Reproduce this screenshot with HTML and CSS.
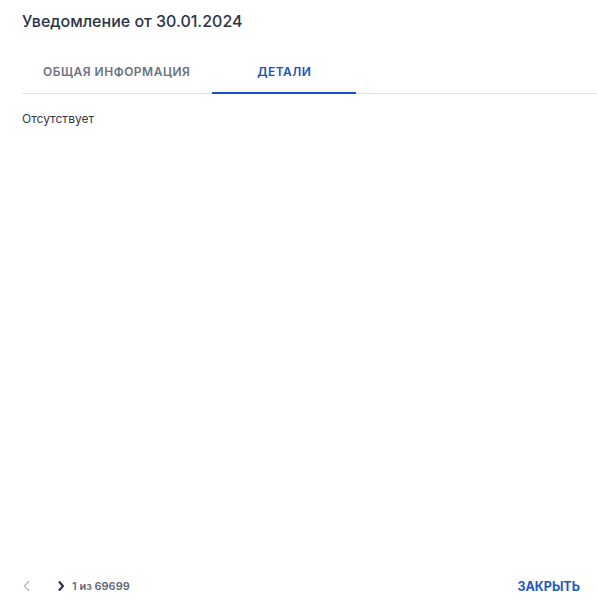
FILE: index.html
```html
<!DOCTYPE html>
<html lang="ru">
<head>
  <meta charset="UTF-8">
  <title>Уведомление</title>
  <link rel="stylesheet" href="styles.css">
</head>
<body>
  <div class="dialog">
    <h1 class="title">Уведомление от 30.01.2024</h1>

    <div class="tabs">
      <div class="tab">ОБЩАЯ ИНФОРМАЦИЯ</div>
      <div class="tab active">ДЕТАЛИ</div>
    </div>

    <div class="content">Отсутствует</div>

    <div class="footer">
      <div class="pager">
        <span class="arrow disabled">
          <svg width="10" height="14" viewBox="0 0 10 14"><path d="M7 2 L2.5 7 L7 12" fill="none" stroke="currentColor" stroke-width="1.4"/></svg>
        </span>
        <span class="arrow">
          <svg width="10" height="14" viewBox="0 0 10 14"><path d="M3 2.5 L7 7 L3 11.5" fill="none" stroke="currentColor" stroke-width="2"/></svg>
        </span>
        <span class="count">1 из 69699</span>
      </div>
      <button class="close">ЗАКРЫТЬ</button>
    </div>
  </div>
</body>
</html>
```

FILE: styles.css
```css
html, body {
  margin: 0;
  height: 100%;
  background: #fff;
}
body {
  font-family: Inter, "Noto Sans", Arial, sans-serif;
  color: #2b3547;
}
.dialog {
  height: 100%;
  box-sizing: border-box;
  padding: 11px 0 0 22px;
  display: flex;
  flex-direction: column;
}
.title {
  margin: 0;
  font-size: 16px;
  font-weight: 500;
  line-height: 20px;
  color: #2a3448;
}
.tabs {
  display: flex;
  margin-top: 19px;
  border-bottom: 1px solid #dfe1e5;
}
.tab {
  height: 44px;
  box-sizing: border-box;
  padding: 0 21px;
  min-width: 144px;
  display: flex;
  align-items: center;
  justify-content: center;
  font-size: 12px;
  font-weight: 600;
  letter-spacing: 0.5px;
  color: #6a7385;
  border-bottom: 2px solid transparent;
  margin-bottom: -1px;
}
.tab.active {
  color: #1753c2;
  border-bottom-color: #1753c2;
  margin-left: 1px;
}
.content {
  flex: 1;
  padding-top: 17px;
  font-size: 12px;
  color: #333a46;
}
.footer {
  display: flex;
  justify-content: space-between;
  align-items: center;
  height: 36px;
  margin-bottom: 5px;
  padding-right: 17px;
}
.pager {
  display: flex;
  align-items: center;
}
.arrow {
  display: flex;
  color: #1f2a40;
  margin-right: 6px;
}
.arrow.disabled {
  color: #b5bbc6;
  margin-right: 24px;
}
.count {
  font-size: 11px;
  font-weight: 600;
  color: #5f6879;
}
.close {
  border: none;
  background: none;
  padding: 0;
  font-family: inherit;
  font-size: 12.5px;
  font-weight: 700;
  color: #1c58c4;
  cursor: pointer;
}
```
